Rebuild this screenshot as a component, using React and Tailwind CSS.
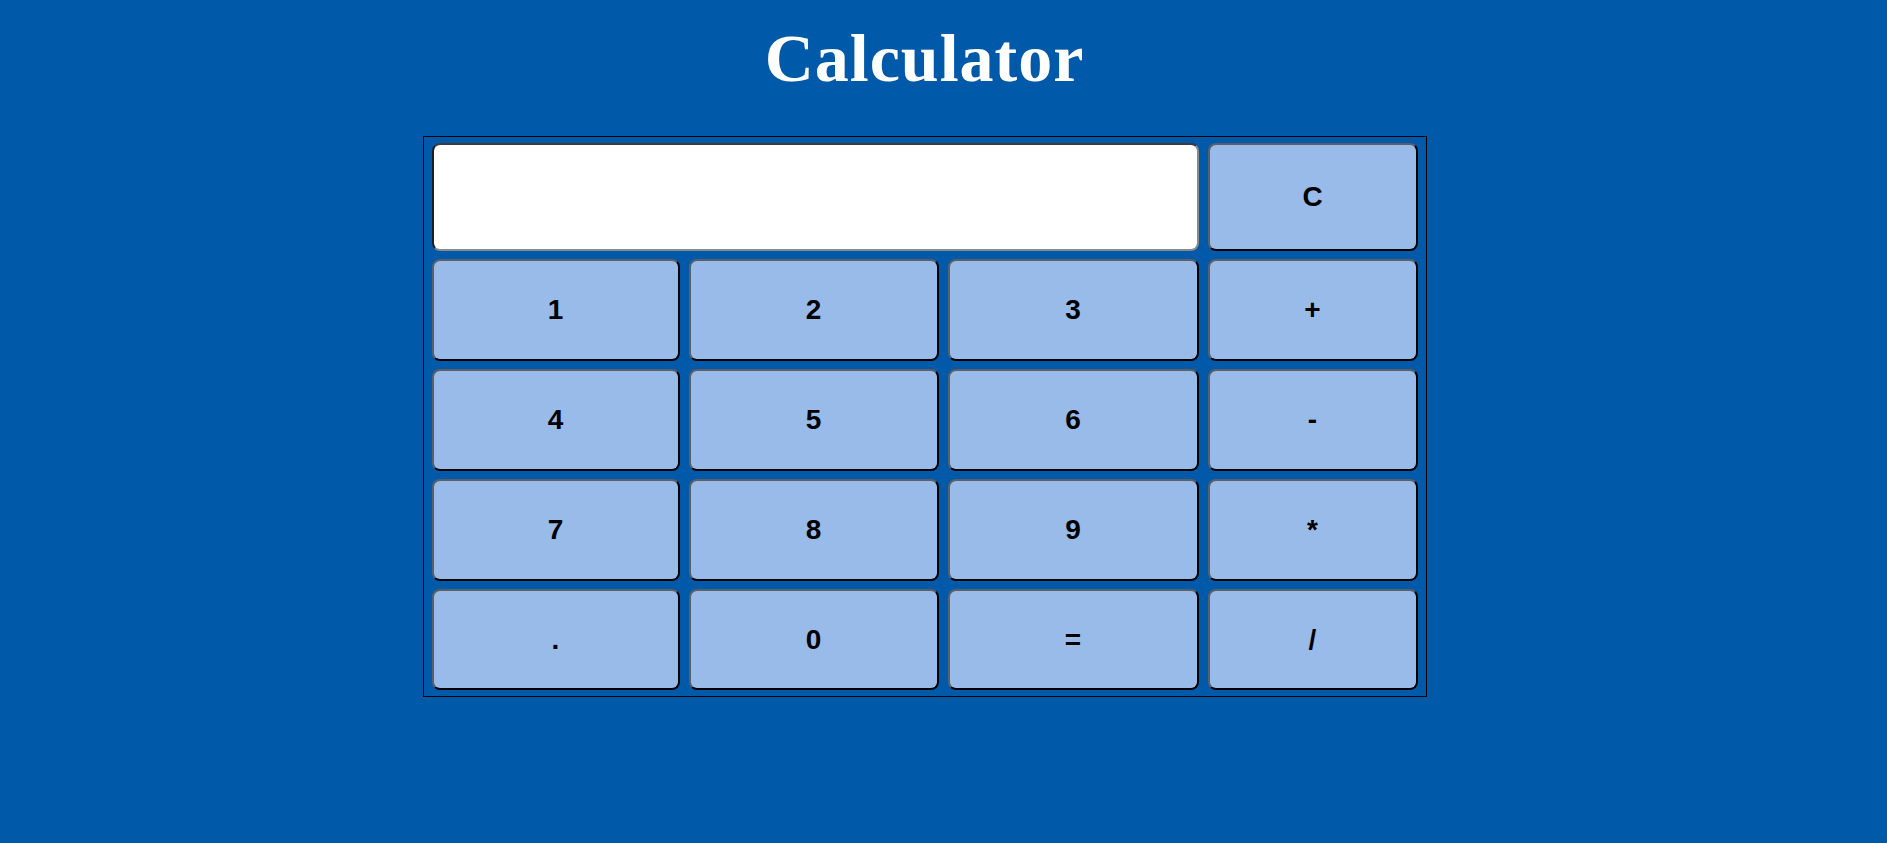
import React, { useState } from 'react';

const keys = [
  ['1', '2', '3', '+'],
  ['4', '5', '6', '-'],
  ['7', '8', '9', '*'],
  ['.', '0', '=', '/'],
];

const btn =
  "h-full w-full rounded-[8px] border-2 border-t-[#5b6066] border-l-[#5b6066] border-b-black border-r-black bg-[#98bbe9] text-[28px] font-bold text-black font-['Liberation_Sans',Arial,sans-serif]";

export default function App() {
  const [value, setValue] = useState('');

  const press = k => {
    if (k === '=') {
      try {
        // eslint-disable-next-line no-eval
        setValue(String(eval(value)));
      } catch (e) {
        setValue('Error');
      }
      return;
    }
    setValue(v => v + k);
  };

  return (
    <div className="min-h-[843px] w-full bg-[#0059a9]">
      <div className="flex w-[1849px] flex-col items-center pt-[24px]">
        <h1 className="text-[68px] leading-[68px] tracking-[1px] font-bold text-white font-['Liberation_Serif','Times_New_Roman',serif]">
          Calculator
        </h1>
        <div className="mt-[44px] border border-black px-[8px] pt-[6px] pb-[6px]">
          <div className="grid grid-cols-[248px_250px_251px_210px] grid-rows-[108px_102px_102px_102px_101px] gap-x-[9px] gap-y-[8px]">
            <input
              className="col-span-3 h-full w-full rounded-[8px] border-2 border-t-[#3c3c3c] border-l-[#1e1e1e] border-b-[#8a8a8a] border-r-[#8a8a8a] bg-white px-3 text-[32px] outline-none font-['Liberation_Sans',Arial,sans-serif]"
              value={value}
              readOnly
            />
            <button className={btn} onClick={() => setValue('')}>C</button>
            {keys.flat().map(k => (
              <button key={k} className={btn} onClick={() => press(k)}>{k}</button>
            ))}
          </div>
        </div>
      </div>
    </div>
  );
}
